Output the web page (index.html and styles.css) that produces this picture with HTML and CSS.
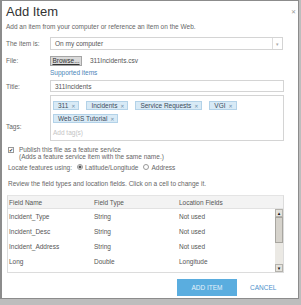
FILE: index.html
```html
<!DOCTYPE html>
<html>
<head>
<meta charset="utf-8">
<title>Add Item</title>
<link rel="stylesheet" href="styles.css">
</head>
<body>
<div class="dialog">
	<div class="head">
		<h1>Add Item</h1>
		<span class="close">&#x2715;</span>
	</div>
	<p class="intro">Add an item from your computer or reference an item on the Web.</p>

	<div class="row kind">
		<label>The item is:</label>
		<div class="select">On my computer<span class="arrow">&#x25BE;</span></div>
	</div>
	<div class="row file">
		<label>File:</label>
		<span class="browse">Browse...</span><span class="fname">311Incidents.csv</span>
	</div>
	<div class="row link"><label></label><a href="#">Supported items</a></div>

	<div class="row name">
		<label>Title:</label>
		<div class="input">311Incidents</div>
	</div>
	<div class="row tagrow">
		<label>Tags:</label>
		<div class="tags">
			<span class="tag">311 <b>&#x2715;</b></span>
			<span class="tag">Incidents <b>&#x2715;</b></span>
			<span class="tag">Service Requests <b>&#x2715;</b></span>
			<span class="tag">VGI <b>&#x2715;</b></span>
			<span class="tag">Web GIS Tutorial <b>&#x2715;</b></span>
			<span class="addtag">Add tag(s)</span>
		</div>
	</div>

	<div class="publish">
		<span class="check">&#x2714;</span>
		<div>Publish this file as a feature service<br>(Adds a feature service item with the same name.)</div>
	</div>
	<div class="locate">
		Locate features using:
		<span class="radio on"></span>Latitude/Longitude
		<span class="radio"></span>Address
	</div>
	<p class="review">Review the field types and location fields. Click on a cell to change it.</p>

	<div class="grid">
		<div class="cols">
			<div class="hrow"><span>Field Name</span><span>Field Type</span><span>Location Fields</span></div>
			<div class="drow"><span>Incident_Type</span><span>String</span><span>Not used</span></div>
			<div class="drow"><span>Incident_Desc</span><span>String</span><span>Not used</span></div>
			<div class="drow"><span>Incident_Address</span><span>String</span><span>Not used</span></div>
			<div class="drow"><span>Long</span><span>Double</span><span>Longitude</span></div>
		</div>
		<div class="scroll">
			<span class="btn">&#x25B4;</span>
			<span class="thumb"></span>
			<span class="track"></span>
			<span class="btn">&#x25BE;</span>
		</div>
	</div>

	<div class="buttons">
		<span class="add">ADD ITEM</span>
		<span class="cancel">CANCEL</span>
	</div>
</div>
</body>
</html>
```

FILE: styles.css
```css
* {
	margin: 0;
	padding: 0;
	box-sizing: border-box;
}

body {
	width: 301px;
	height: 305px;
	background: #bdbdbd;
	font-family: "Liberation Sans", sans-serif;
	font-size: 6.5px;
	color: #666;
	overflow: hidden;
}

.dialog {
	width: 299px;
	height: 299px;
	background: #fff;
	border: 1px solid #8c8c8c;
	border-left-width: 2px;
	padding: 1px 14px 0 4px;
}

.head {
	display: flex;
	justify-content: space-between;
	align-items: flex-start;
	height: 20px;
}

h1 {
	font-weight: normal;
	font-size: 13px;
	line-height: 20px;
	color: #333;
}

.close {
	font-family: "DejaVu Sans", sans-serif;
	font-size: 6px;
	line-height: 6px;
	color: #999;
	margin: 7px -12px 0 0;
}

.intro {
	margin-top: 1px;
	line-height: 7px;
}

.row {
	display: flex;
	align-items: center;
}

.row label {
	width: 44px;
	flex: none;
}

.kind {
	margin-top: 7px;
	height: 13px;
}

.file {
	margin-top: 4px;
	height: 13px;
}

.link {
	margin-top: 1px;
	height: 8px;
}

.name {
	margin-top: 4px;
	height: 12px;
}

.select, .input {
	flex: 1;
	height: 100%;
	border: 1px solid #d4d4d4;
	padding: 0 0 0 4px;
	display: flex;
	align-items: center;
	justify-content: space-between;
	color: #555;
}

.select {
	margin-right: 1px;
}

.arrow {
	border-left: 1px solid #ddd;
	width: 10px;
	height: 100%;
	display: flex;
	align-items: center;
	justify-content: center;
	color: #aaa;
	font-size: 5px;
}

.browse {
	height: 10px;
	width: 32px;
	background: #dadada;
	border: 1px solid #a5a5a5;
	color: #333;
	text-align: center;
	line-height: 8px;
	text-decoration: underline;
}

.fname {
	margin-left: 8px;
	color: #555;
}

.link a {
	color: #4a86b8;
	text-decoration: none;
}

.tagrow {
	margin-top: 3px;
	align-items: flex-start;
}

.tagrow label {
	margin-top: 28px;
}

.tags {
	flex: 1;
	height: 46px;
	border: 1px solid #d4d4d4;
	padding: 5px 2px 0;
	display: flex;
	flex-wrap: wrap;
	align-content: flex-start;
	gap: 4px 7px;
}

.tag {
	background: #d8eaf6;
	border: 1px solid #b3d2e8;
	color: #3c4a5a;
	padding: 0 3px 0 4px;
	height: 9px;
	line-height: 7px;
}

.tag b {
	font-family: "DejaVu Sans", sans-serif;
	font-weight: normal;
	color: #6f8faa;
	font-size: 5px;
	margin-left: 1px;
}

.addtag {
	width: 100%;
	color: #c4c4c4;
	margin-top: 2px;
}

.publish {
	display: flex;
	gap: 5px;
	margin-top: 5px;
	line-height: 7px;
	padding-left: 2px;
}

.check {
	width: 6px;
	height: 6px;
	flex: none;
	border: 1px solid #999;
	font-family: "DejaVu Sans", sans-serif;
	font-size: 5px;
	line-height: 4px;
	text-align: center;
	color: #333;
	margin-top: 1px;
}

.locate {
	margin-top: 3px;
	height: 8px;
	display: flex;
	align-items: center;
	gap: 2px;
	padding-left: 2px;
}

.radio {
	width: 6px;
	height: 6px;
	border: 1px solid #999;
	border-radius: 50%;
	margin-left: 3px;
}

.radio.on {
	background: radial-gradient(#555 1.2px, transparent 1.8px);
}

.review {
	margin-top: 9px;
	line-height: 8px;
	padding-left: 2px;
}

.grid {
	margin: 7px 0 0 1px;
	height: 78px;
	border: 1px solid #dcdcdc;
	border-top-color: #e4e4e4;
	display: flex;
	position: relative;
}

.cols {
	flex: 1;
}

.hrow, .drow {
	display: grid;
	grid-template-columns: 85px 85px 1fr;
	height: 15px;
	line-height: 15px;
	padding-left: 1px;
	color: #555;
}

.hrow {
	height: 13px;
	line-height: 13px;
	background: #f3f3f3;
	border-bottom: 1px solid #e2e2e2;
}

.scroll {
	position: absolute;
	right: 0;
	top: 13px;
	bottom: 0;
	width: 8px;
	background: #ebe9e4;
	display: flex;
	flex-direction: column;
}

.btn {
	height: 8px;
	background: #e4e2dc;
	border: 1px solid #b4b2ac;
	font-family: "DejaVu Sans", sans-serif;
	font-size: 5px;
	line-height: 6px;
	text-align: center;
	color: #111;
}

.thumb {
	height: 26px;
	background: #d6d3cc;
	border: 1px solid #a8a6a0;
}

.track {
	flex: 1;
}

.buttons {
	display: flex;
	justify-content: flex-end;
	align-items: center;
	gap: 13px;
	margin-top: 6px;
	padding-right: 6px;
}

.add {
	width: 60px;
	height: 17px;
	background: #5aaddf;
	color: #e6f2fa;
	text-align: center;
	line-height: 17px;
}

.cancel {
	width: 28px;
	color: #4e92cb;
}
```
